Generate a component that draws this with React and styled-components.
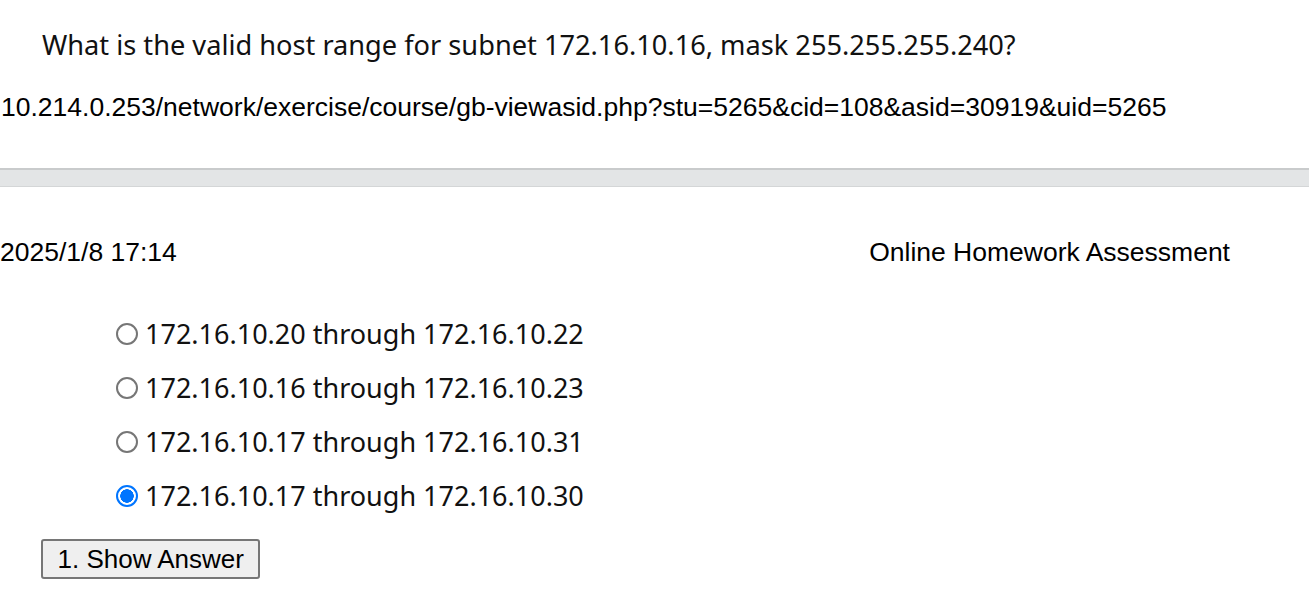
import React from "react";
import styled, { createGlobalStyle } from "styled-components";

const Global = createGlobalStyle`
  html, body { margin: 0; padding: 0; background: #ffffff; }
  body { color: #000; }
`;

const Page = styled.div`
  width: 1309px;
  height: 593px;
  overflow: hidden;
  display: flex;
  flex-direction: column;
`;

const Question = styled.div`
  font-family: "Noto Sans", "Open Sans", sans-serif;
  font-size: 27.2px;
  line-height: 32px;
  padding: 29px 0 0 42px;
  color: #111;
  white-space: nowrap;
`;

const Url = styled.div`
  font-family: "Liberation Sans", Arial, sans-serif;
  font-size: 26.5px;
  line-height: 32px;
  margin-top: 30px;
  padding-left: 1px;
  white-space: nowrap;
`;

const Bar = styled.div`
  margin-top: 45px;
  height: 16px;
  background: #e3e5e6;
  border-top: 2px solid #c9cbcc;
  border-bottom: 1px solid #d4d6d7;
`;

const HeaderRow = styled.div`
  display: flex;
  justify-content: space-between;
  align-items: center;
  margin-top: 49px;
  padding: 0 79px 0 0;
  font-family: "Liberation Sans", Arial, sans-serif;
  font-size: 26.5px;
  line-height: 32px;
`;

const Options = styled.div`
  display: flex;
  flex-direction: column;
  gap: 22px;
  margin-top: 50px;
  padding-left: 116px;
`;

const Option = styled.label`
  display: flex;
  align-items: center;
  font-family: "Noto Sans", "Open Sans", sans-serif;
  font-size: 27px;
  line-height: 32px;
  color: #111;
`;

const Radio = styled.input`
  appearance: none;
  -webkit-appearance: none;
  box-sizing: border-box;
  width: 22px;
  height: 22px;
  margin: 0 7px 0 0;
  border-radius: 50%;
  border: 2px solid #767676;
  background: #fff;
  flex-shrink: 0;

  &:checked {
    border-color: #0075ff;
    background: radial-gradient(circle, #0075ff 0 6.5px, #fff 7px);
  }
`;

const Button = styled.button`
  align-self: flex-start;
  margin: 27px 0 0 41px;
  height: 40px;
  padding: 0 14.5px;
  font-family: "Liberation Sans", Arial, sans-serif;
  font-size: 26px;
  background: #efefef;
  border: 2px solid #767676;
  border-radius: 3px;
  color: #000;
`;

const options = [
  { text: "172.16.10.20 through 172.16.10.22", checked: false },
  { text: "172.16.10.16 through 172.16.10.23", checked: false },
  { text: "172.16.10.17 through 172.16.10.31", checked: false },
  { text: "172.16.10.17 through 172.16.10.30", checked: true },
];

export default function App() {
  return (
    <Page>
      <Global />
      <Question>
        What is the valid host range for subnet 172.16.10.16, mask 255.255.255.240?
      </Question>
      <Url>
        10.214.0.253/network/exercise/course/gb-viewasid.php?stu=5265&amp;cid=108&amp;asid=30919&amp;uid=5265
      </Url>
      <Bar />
      <HeaderRow>
        <span>2025/1/8 17:14</span>
        <span>Online Homework Assessment</span>
      </HeaderRow>
      <Options>
        {options.map((o, i) => (
          <Option key={i}>
            <Radio type="radio" name="q1" defaultChecked={o.checked} />
            {o.text}
          </Option>
        ))}
      </Options>
      <Button type="button">1. Show Answer</Button>
    </Page>
  );
}
